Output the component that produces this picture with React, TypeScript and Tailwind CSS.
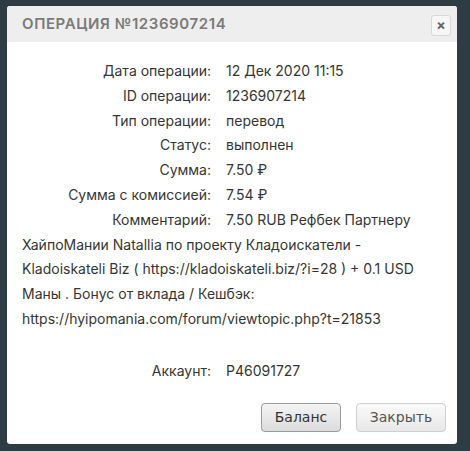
const rows: [string, string][] = [
  ["Дата операции:", "12 Дек 2020 11:15"],
  ["ID операции:", "1236907214"],
  ["Тип операции:", "перевод"],
  ["Статус:", "выполнен"],
  ["Сумма:", "7.50 ₽"],
  ["Сумма с комиссией:", "7.54 ₽"],
];

function Row({ label, children }: { label: string; children: React.ReactNode }) {
  return (
    <p>
      <span className="inline-block w-[189px] mr-[15px] text-right">{label}</span>
      {children}
    </p>
  );
}

export default function App() {
  return (
    <div className="w-[470px] h-[451px] bg-[#2e3c44] pt-[6px] pl-[7px] font-['Inter',sans-serif]">
      <div className="w-[450px] h-[438px] bg-white rounded-[3px] flex flex-col overflow-hidden">
        <div className="h-[36px] bg-[#eeeeee] flex items-center justify-between pl-[15px] pr-[6px]">
          <h2 className="text-[15px] font-semibold tracking-[0.6px] text-[#7a7a7a]">
            ОПЕРАЦИЯ №1236907214
          </h2>
          <button className="w-[20px] h-[21px] mt-[2px] rounded-[3px] border border-[#d8d8d8] bg-[#f6f6f6] flex items-center justify-center text-[#666] text-[14px] font-bold leading-none">
            ×
          </button>
        </div>

        <div className="pt-[17px] pl-[15px] pr-[14px] text-[14px] leading-[24.8px] text-[#353535]">
          {rows.map(([l, v]) => (
            <Row key={l} label={l}>
              {v}
            </Row>
          ))}
          <Row label="Комментарий:">
            7.50 RUB Рефбек Партнеру ХайпоМании Natallia по проекту Кладоискатели -
            Kladoiskateli Biz ( https://kladoiskateli.biz/?i=28 ) + 0.1 USD Маны .
            Бонус от вклада / Кешбэк: https://hyipomania.com/forum/viewtopic.php?t=21853
          </Row>
          <p className="mt-[2px]">&nbsp;</p>
          <Row label="Аккаунт:">P46091727</Row>
        </div>

        <div className="mt-auto mb-[12px] flex justify-end gap-[15px] pr-[11px] font-['DejaVu_Sans',sans-serif] text-[14px]">
          <button className="w-[80px] h-[29px] rounded-[4px] border border-[#9a9a9a] bg-gradient-to-b from-[#f4f4f4] to-[#dcdcdc] text-[#333]">
            Баланс
          </button>
          <button className="w-[90px] h-[29px] rounded-[4px] border border-[#cfcfcf] bg-gradient-to-b from-[#fafafa] to-[#e8e8e8] text-[#555]">
            Закрыть
          </button>
        </div>
      </div>
    </div>
  );
}
